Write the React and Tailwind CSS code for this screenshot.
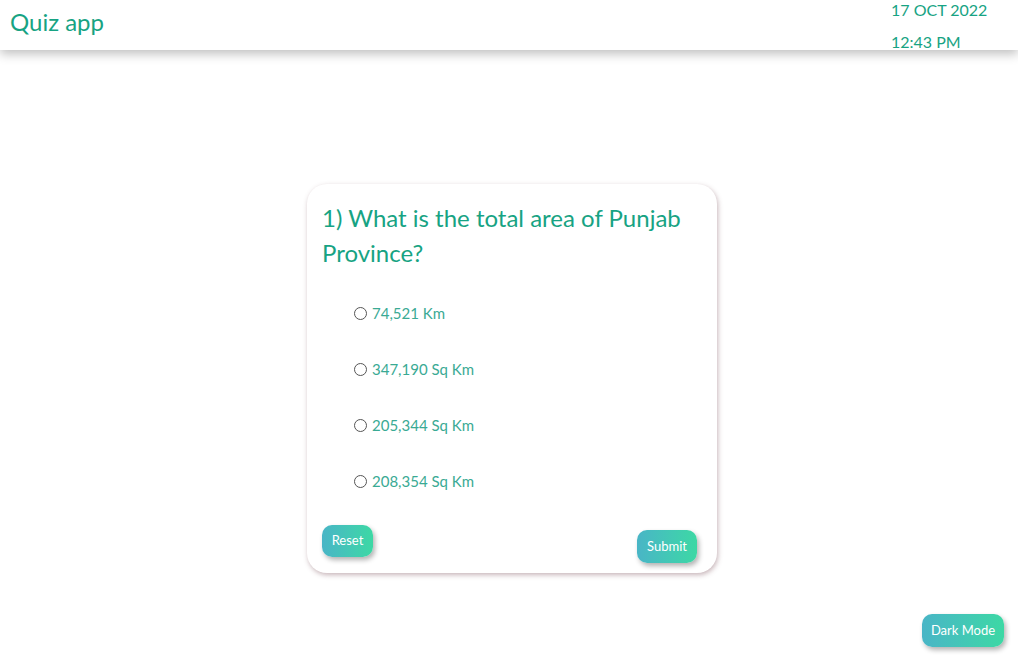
const options = ['74,521 Km', '347,190 Sq Km', '205,344 Sq Km', '208,354 Sq Km'];

const btn =
  'rounded-[10px] bg-gradient-to-r from-[#49b5c6] to-[#3dd8a4] text-white shadow-[2px_3px_5px_rgba(0,0,0,0.3)]';

export default function App() {
  return (
    <div
      className="relative flex h-[656px] w-[1018px] flex-col bg-white text-[#17a383]"
      style={{ fontFamily: 'Lato, "Noto Sans", sans-serif' }}
    >
      {/* Header */}
      <header className="flex h-[50px] items-start justify-between bg-white shadow-[0_4px_10px_rgba(0,0,0,0.25)]">
        <h1 className="pl-[10px] pt-[7px] text-[24px] leading-[30px]">Quiz app</h1>
        <div className="w-[127px] text-[16px] leading-[32px] -mt-[6px]">
          <p>17 OCT 2022</p>
          <p>12:43 PM</p>
        </div>
      </header>

      {/* Card */}
      <main className="flex flex-1 justify-center pl-[6px] pt-[134px]">
        <div className="flex h-[389px] w-[410px] flex-col rounded-[20px] bg-white pl-[15px] pr-[20px] pt-[16px] shadow-[1px_2px_5px_rgba(130,90,100,0.45)]">
          <h2 className="text-[24px] leading-[35px]">1) What is the total area of Punjab Province?</h2>
          <div className="mt-[33px] flex flex-col gap-[35px] pl-[32px]">
            {options.map((o) => (
              <label key={o} className="flex h-[21px] items-center gap-[5px] text-[15px] text-[#3aaa94]">
                <span className="h-[13px] w-[13px] rounded-full border border-[#555]" />
                {o}
              </label>
            ))}
          </div>
          <div className="mt-[33px] flex items-start justify-between">
            <button className={`${btn} h-[32px] w-[51px] text-[13px]`}>Reset</button>
            <button className={`${btn} mt-[5px] h-[33px] w-[60px] text-[13px]`}>Submit</button>
          </div>
        </div>
      </main>

      <button className={`${btn} absolute left-[922px] top-[614px] h-[33px] w-[82px] text-[13px]`}>
        Dark Mode
      </button>
    </div>
  );
}
